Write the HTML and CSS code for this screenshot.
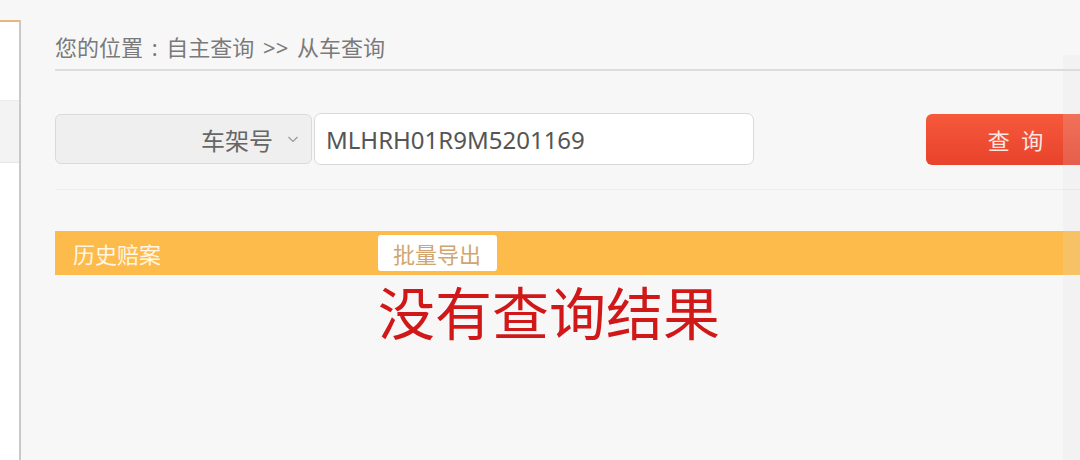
FILE: index.html
```html
<!DOCTYPE html>
<html lang="zh-CN">
<head>
    <meta charset="UTF-8">
    <title>从车查询</title>
    <link rel="stylesheet" href="styles.css">
</head>
<body>
    <div class="sidebar">
        <div class="side-item"></div>
    </div>
    <div class="main">
        <div class="crumb">您的位置 : 自主查询 &gt;&gt; 从车查询</div>

        <div class="search">
            <div class="select">
                <span>车架号</span>
                <svg class="chevron" width="12" height="8" viewBox="0 0 12 8"><path d="M1.5 2 L6 6.5 L10.5 2" fill="none" stroke="#999" stroke-width="1.2"/></svg>
            </div>
            <div class="input">MLHRH01R9M5201169</div>
            <div class="spacer"></div>
            <button class="btn-query">查&nbsp;询</button>
        </div>

        <div class="result-bar">
            <div class="bar-title">历史赔案</div>
            <button class="btn-export">批量导出</button>
        </div>
        <div class="empty">没有查询结果</div>
    </div>
    <div class="gutter"></div>
</body>
</html>
```

FILE: styles.css
```css
body {
    margin: 0;
    height: 460px;
    overflow: hidden;
    display: flex;
    background-color: #f8f7f8;
    font-family: "Noto Sans", "Noto Sans CJK SC", sans-serif;
}
.sidebar {
    width: 19px;
    margin-top: 20px;
    background-color: #fff;
    border-top: 2px solid #e9b67c;
    border-right: 2px solid #c9c9c9;
    flex-shrink: 0;
}
.side-item {
    margin-top: 78px;
    height: 61px;
    background-color: #f3f3f3;
    border-top: 1px solid #ececec;
    border-bottom: 1px solid #e6e6e6;
}
.main {
    flex: 1;
    padding: 32px 0 0 34px;
    min-width: 0;
}
.crumb {
    font-size: 22px;
    line-height: 30px;
    color: #7a7a7a;
    padding-bottom: 7px;
    border-bottom: 2px solid #dcdcdc;
    word-spacing: 3px;
}
.search {
    display: flex;
    align-items: center;
    margin-top: 42px;
    padding-bottom: 24px;
    border-bottom: 1px solid #ececec;
}
.select {
    width: 257px;
    height: 50px;
    box-sizing: border-box;
    display: flex;
    align-items: center;
    justify-content: flex-end;
    padding-right: 12px;
    background-color: #efefef;
    border: 1px solid #dadada;
    border-radius: 6px;
    font-size: 24px;
    color: #666;
}
.chevron {
    margin-left: 14px;
}
.input {
    width: 440px;
    height: 52px;
    box-sizing: border-box;
    margin-left: 2px;
    padding-left: 11px;
    display: flex;
    align-items: center;
    background-color: #fff;
    border: 1px solid #d9d9d9;
    border-radius: 7px;
    font-size: 24px;
    color: #555;
}
.spacer {
    flex: 1;
}
.btn-query {
    width: 182px;
    height: 51px;
    flex-shrink: 0;
    margin-right: -28px;
    border: none;
    border-radius: 6px;
    background: linear-gradient(#f6593c, #e8432b);
    color: #fde8e0;
    font-family: inherit;
    font-size: 22px;
    letter-spacing: 3px;
}
.result-bar {
    display: flex;
    align-items: center;
    height: 44px;
    margin-top: 41px;
    margin-right: -30px;
    padding-left: 18px;
    background-color: #fdbb4c;
}
.bar-title {
    width: 305px;
    font-size: 22px;
    color: #fff6e6;
}
.btn-export {
    height: 36px;
    padding: 0 16px 0 15px;
    border: none;
    border-radius: 3px;
    background-color: #fff;
    color: #cfa672;
    font-family: inherit;
    font-size: 22px;
}
.empty {
    margin-top: 8px;
    padding-left: 323px;
    font-size: 57px;
    line-height: 60px;
    color: #d01818;
}
.gutter {
    position: absolute;
    top: 55px;
    right: 0;
    width: 17px;
    height: 405px;
    background-color: rgba(220, 220, 220, 0.18);
}
```
